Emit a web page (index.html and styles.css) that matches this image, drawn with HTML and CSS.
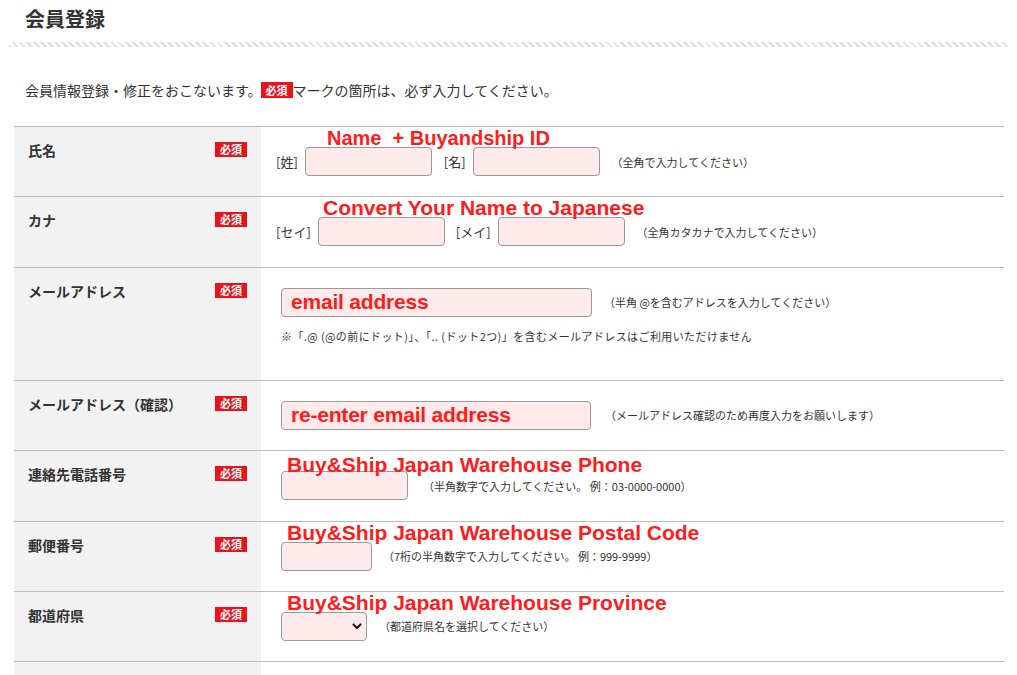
FILE: index.html
```html
<!DOCTYPE html>
<html lang="ja">
<head>
<meta charset="utf-8">
<title>会員登録</title>
<link rel="stylesheet" href="styles.css">
</head>
<body>
<div class="page">
  <h1 class="title">会員登録</h1>
  <div class="stripe"></div>
  <p class="intro">会員情報登録・修正をおこないます。<span class="badge badge-inline">必須</span>マークの箇所は、必ず入力してください。</p>

  <div class="form">
    <div class="row">
      <div class="label"><span>氏名</span><span class="badge">必須</span></div>
      <div class="field field-names">
        <span class="anno anno-name">Name&nbsp; + Buyandship ID</span>
        <div class="line">
          <span class="bracket">[姓]</span>
          <input class="input w127 ml7" type="text">
          <span class="bracket ml12">[名]</span>
          <input class="input w127 ml7" type="text">
          <span class="note ml12">（全角で入力してください）</span>
        </div>
      </div>
    </div>

    <div class="row">
      <div class="label"><span>カナ</span><span class="badge">必須</span></div>
      <div class="field field-names">
        <span class="anno anno-kana">Convert Your Name to Japanese</span>
        <div class="line">
          <span class="bracket">[セイ]</span>
          <input class="input w127 ml7" type="text">
          <span class="bracket ml11">[メイ]</span>
          <input class="input w127 ml7" type="text">
          <span class="note ml12">（全角カタカナで入力してください）</span>
        </div>
      </div>
    </div>

    <div class="row row-tall">
      <div class="label"><span>メールアドレス</span><span class="badge">必須</span></div>
      <div class="field">
        <div class="line">
          <input class="input input-anno w311" type="text" value="email address">
          <span class="note ml12">（半角 @を含むアドレスを入力してください）</span>
        </div>
        <p class="subnote">※「.@ (@の前にドット)」、「.. (ドット2つ)」を含むメールアドレスはご利用いただけません</p>
      </div>
    </div>

    <div class="row">
      <div class="label"><span>メールアドレス（確認）</span><span class="badge">必須</span></div>
      <div class="field">
        <div class="line">
          <input class="input input-anno w310" type="text" value="re-enter email address">
          <span class="note ml14">（メールアドレス確認のため再度入力をお願いします）</span>
        </div>
      </div>
    </div>

    <div class="row">
      <div class="label"><span>連絡先電話番号</span><span class="badge">必須</span></div>
      <div class="field">
        <span class="anno anno-phone">Buy&amp;Ship Japan Warehouse Phone</span>
        <div class="line">
          <input class="input w127" type="text">
          <span class="note ml15">（半角数字で入力してください。 例：03-0000-0000）</span>
        </div>
      </div>
    </div>

    <div class="row">
      <div class="label"><span>郵便番号</span><span class="badge">必須</span></div>
      <div class="field">
        <span class="anno anno-postal">Buy&amp;Ship Japan Warehouse Postal Code</span>
        <div class="line">
          <input class="input w91" type="text">
          <span class="note ml11">（7桁の半角数字で入力してください。 例：999-9999）</span>
        </div>
      </div>
    </div>

    <div class="row">
      <div class="label"><span>都道府県</span><span class="badge">必須</span></div>
      <div class="field">
        <span class="anno anno-province">Buy&amp;Ship Japan Warehouse Province</span>
        <div class="line">
          <div class="select-wrap">
            <select class="select"><option></option></select>
            <svg class="chevron" width="10" height="7" viewBox="0 0 10 7" aria-hidden="true"><path d="M1.5 1.5 L5 5 L8.5 1.5" fill="none" stroke="#222" stroke-width="2.2" stroke-linecap="round" stroke-linejoin="round"/></svg>
          </div>
          <span class="note ml12">（都道府県名を選択してください）</span>
        </div>
      </div>
    </div>

    <div class="row row-last">
      <div class="label"></div>
      <div class="field field-empty"></div>
    </div>
  </div>
</div>
</body>
</html>
```

FILE: styles.css
```css
* {
  box-sizing: border-box;
}

html, body {
  margin: 0;
  padding: 0;
  background: #fff;
}

body {
  font-family: "Noto Sans CJK JP", "Noto Sans", sans-serif;
  color: #333;
  width: 1017px;
  overflow: hidden;
}

.page {
  padding-top: 5px;
}

.title {
  margin: 0;
  padding-left: 25px;
  font-size: 20px;
  line-height: 28px;
  font-weight: 700;
  color: #333;
}

.stripe {
  margin: 9px 0 0 9px;
  width: 1000px;
  height: 5px;
  background: repeating-linear-gradient(45deg, #dcdcdc 0 2px, transparent 2px 5px);
}

.intro {
  margin: 33px 0 26px 25px;
  font-size: 14px;
  line-height: 20px;
  color: #333;
}

.badge {
  display: inline-block;
  background: #e8141b;
  color: #fff;
  font-size: 11px;
  font-weight: 700;
  line-height: 15px;
  height: 15px;
  padding: 0 5px;
  letter-spacing: 0;
}

.badge-inline {
  line-height: 16px;
  height: 16px;
  vertical-align: 1px;
  margin: 0 0 0 -1px;
}

.form {
  margin-left: 14px;
  width: 990px;
  border-top: 1px solid #bbb;
}

.row {
  display: grid;
  grid-template-columns: 247px 1fr;
  border-bottom: 1px solid #bbb;
}

.row-last {
  border-bottom: none;
  height: 20px;
}

.label {
  background: #f2f2f2;
  padding: 13px 14px 0 14px;
  display: flex;
  justify-content: space-between;
  align-items: flex-start;
  font-size: 14px;
  line-height: 20px;
  font-weight: 700;
  color: #333;
}

.label .badge {
  margin-top: 2px;
}

.field {
  position: relative;
  padding: 20px 0 20px 20px;
  min-height: 69.4px;
}

.field-empty {
  min-height: 20px;
  padding: 0;
}

.field-names {
  padding-left: 15px;
}

.row-tall .field {
  padding-bottom: 36px;
}

.line {
  display: flex;
  align-items: center;
  height: 29px;
}

.bracket {
  font-size: 13px;
  line-height: 20px;
  color: #333;
}

.input {
  height: 29px;
  border: 1px solid #999;
  border-radius: 4px;
  background: #fdeaea;
  padding: 0 9px;
  margin: 0;
  font-family: "Liberation Sans", Arial, sans-serif;
  font-size: 13px;
  color: #333;
  outline: none;
}

.input-anno {
  font-family: "Liberation Sans", Arial, sans-serif;
  font-size: 21px;
  font-weight: 700;
  color: #fe1c1c;
  letter-spacing: -0.2px;
}

.w127 { width: 127px; }
.w91 { width: 91px; }
.w311 { width: 311px; }
.w310 { width: 310px; }

.ml7 { margin-left: 7px; }
.ml11 { margin-left: 11px; }
.ml12 { margin-left: 12px; }
.ml14 { margin-left: 14px; }
.ml15 { margin-left: 15px; }

.note {
  font-size: 11px;
  line-height: 16px;
  color: #333;
  white-space: nowrap;
}

.subnote {
  margin: 11px 0 0 0;
  font-size: 11px;
  line-height: 16px;
  color: #333;
  letter-spacing: 0.4px;
}

.select-wrap {
  position: relative;
  width: 86px;
  height: 29px;
}

.select {
  appearance: none;
  -webkit-appearance: none;
  width: 86px;
  height: 29px;
  border: 1px solid #999;
  border-radius: 4px;
  background: #fdeaea;
  margin: 0;
  padding: 0 8px;
  font-size: 13px;
  outline: none;
}

.chevron {
  position: absolute;
  right: 5px;
  top: 11px;
  pointer-events: none;
}

.anno {
  position: absolute;
  font-family: "Liberation Sans", Arial, sans-serif;
  font-weight: 700;
  font-size: 21px;
  line-height: 20px;
  color: #fe1c1c;
  white-space: nowrap;
  z-index: 2;
}

.anno-name {
  left: 66px;
  top: 1px;
  font-size: 20px;
}

.anno-kana {
  left: 62px;
  top: 1px;
}

.anno-phone {
  left: 26px;
  top: 4px;
}

.anno-postal {
  left: 26px;
  top: 1px;
}

.anno-province {
  left: 26px;
  top: 1px;
}
```
